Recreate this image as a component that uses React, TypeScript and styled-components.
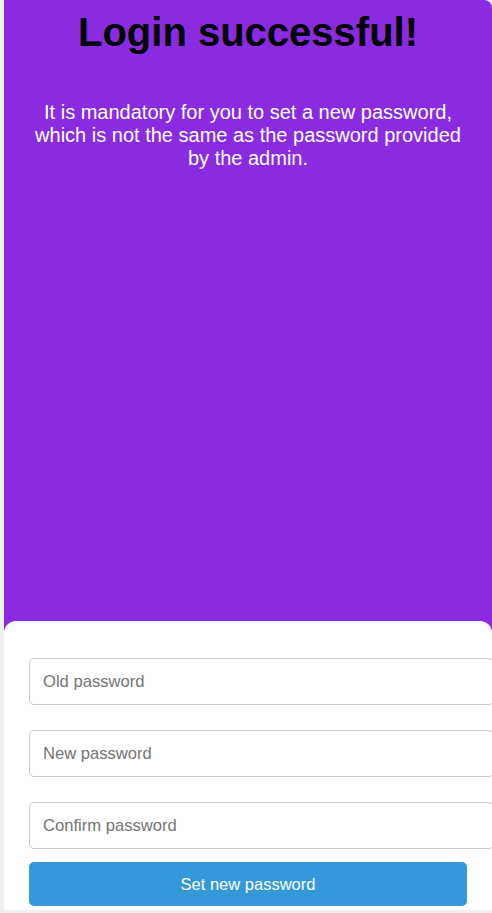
import React from "react";
import styled, { createGlobalStyle } from "styled-components";

const GlobalStyle = createGlobalStyle`
  html, body {
    margin: 0;
    padding: 0;
    overflow: hidden;
    background: #f0f0f0;
    font-family: "Liberation Sans", Arial, sans-serif;
  }
  * { box-sizing: border-box; }
`;

const Page = styled.div`
  height: 913px;
  padding-left: 4px;
  background: #f0f0f0;
`;

const Panel = styled.main`
  width: 488px;
  height: 910px;
  background: #8a2be2;
  border-top-right-radius: 8px;
  display: flex;
  flex-direction: column;
  overflow: hidden;
`;

const Header = styled.header`
  padding: 9px 20px 0;
  text-align: center;
`;

const Title = styled.h1`
  margin: 0;
  font-size: 40px;
  line-height: 46px;
  font-weight: 700;
  color: #000;
`;

const Notice = styled.p`
  margin: 46px 0 0;
  font-size: 20px;
  line-height: 23px;
  color: #fff;
`;

const Card = styled.form`
  margin-top: auto;
  height: 289px;
  background: #fff;
  border-radius: 12px 12px 0 0;
  padding: 37px 25px 0;
  display: flex;
  flex-direction: column;
`;

const Field = styled.input`
  box-sizing: content-box;
  width: 100%;
  height: 20px;
  padding: 13px 12px 12px 13px;
  margin: 0 0 25px;
  border: 1px solid #ccc;
  border-radius: 5px;
  font-family: "Liberation Sans", Arial, sans-serif;
  font-size: 16.6px;
  line-height: 20px;
  color: #333;
  background: #fff;
  outline: none;
  &::placeholder { color: #757575; }
  &:last-of-type { margin-bottom: 13px; }
`;

const Submit = styled.button`
  width: 100%;
  height: 44px;
  border: none;
  border-radius: 5px;
  background: #3498db;
  color: #fff;
  font-family: "Liberation Sans", Arial, sans-serif;
  font-size: 16.5px;
  cursor: pointer;
`;

export default function App() {
  return (
    <>
      <GlobalStyle />
      <Page>
        <Panel>
          <Header>
            <Title>Login successful!</Title>
            <Notice>
              It is mandatory for you to set a new password, which is not the same as the
              password provided by the admin.
            </Notice>
          </Header>
          <Card onSubmit={(e) => e.preventDefault()}>
            <Field type="password" placeholder="Old password" />
            <Field type="password" placeholder="New password" />
            <Field type="password" placeholder="Confirm password" />
            <Submit type="submit">Set new password</Submit>
          </Card>
        </Panel>
      </Page>
    </>
  );
}
